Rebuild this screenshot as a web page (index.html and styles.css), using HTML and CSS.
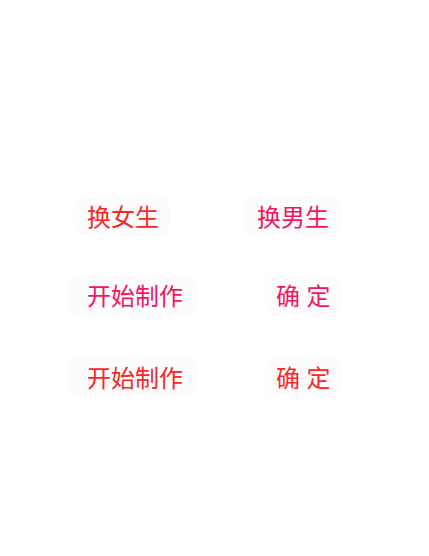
FILE: index.html
```html
<!DOCTYPE html>
<html lang="zh">
<head>
<meta charset="utf-8">
<link rel="stylesheet" href="styles.css">
</head>
<body>
<div class="page">
  <div class="row row-1">
    <div class="btn btn-red btn-f">换女生</div>
    <div class="btn btn-pink btn-m">换男生</div>
  </div>
  <div class="row row-2">
    <div class="btn btn-pink btn-start">开始制作</div>
    <div class="btn btn-pink btn-ok">确 定</div>
  </div>
  <div class="row row-3">
    <div class="btn btn-red btn-start">开始制作</div>
    <div class="btn btn-red btn-ok">确 定</div>
  </div>
</div>
</body>
</html>
```
FILE: styles.css
```css
html, body {
  margin: 0;
  padding: 0;
  background: #ffffff;
}
.page {
  width: 429px;
  height: 556px;
  padding: 195px 87px 0 67px;
  box-sizing: border-box;
  display: flex;
  flex-direction: column;
  font-family: "Noto Sans CJK SC", "Noto Sans", sans-serif;
}
.row {
  display: flex;
  justify-content: space-between;
  align-items: center;
}
.row-2 { margin-top: 37px; }
.row-3 { margin-top: 40px; }
.btn {
  height: 42px;
  box-sizing: border-box;
  display: flex;
  align-items: center;
  padding-bottom: 1px;
  font-size: 24px;
  line-height: 1;
  background: #fcfcfc;
  border-radius: 12px;
  white-space: pre;
}
.btn-red { color: #fa2626; }
.btn-pink { color: #f5145e; }
.btn-f { margin-left: 6px; padding-left: 14px; padding-right: 11px; }
.btn-m { padding-left: 13px; padding-right: 13px; }
.btn-start { padding-left: 20px; padding-right: 15px; }
.btn-ok { padding-left: 11px; padding-right: 11px; letter-spacing: 0.5px; }
```
